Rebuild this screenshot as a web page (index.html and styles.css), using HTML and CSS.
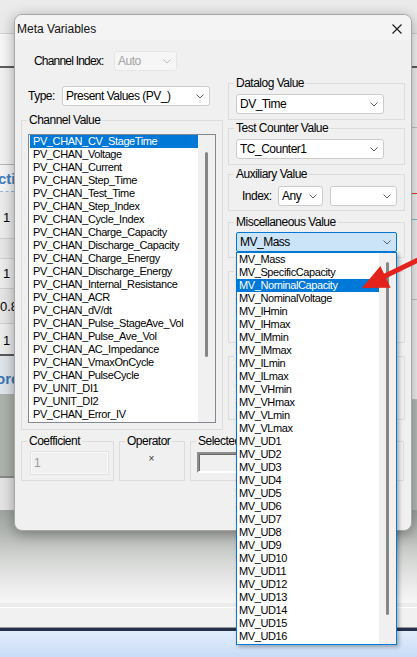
FILE: index.html
```html
<!DOCTYPE html>
<html>
<head>
<meta charset="utf-8">
<title>Meta Variables</title>
<link rel="stylesheet" href="styles.css">
</head>
<body>
<div class="app">
  <div class="app-top"></div>
  <div class="app-mid">
    <div class="pane-left">
      <div class="lp-a"></div>
      <div class="lp-head"><span>cti</span></div>
      <div class="lp-row lp-r1"><span>1</span></div>
      <div class="lp-row lp-r2"></div>
      <div class="lp-row lp-r3"><span>1</span></div>
      <div class="lp-row lp-r4"><span>0.8</span></div>
      <div class="lp-row lp-r5"><span>1</span></div>
      <div class="lp-head2"><span>ore</span></div>
      <div class="lp-grey"></div>
      <div class="lp-light"></div>
    </div>
    <div class="pane-center"></div>
    <div class="pane-right">
      <div class="rp rp1"></div>
      <div class="rp rp2"></div>
      <div class="rp rp3"></div>
      <div class="rp rp4"></div>
      <div class="rp rp5"></div>
      <div class="rp rp6"></div>
    </div>
  </div>
  <div class="app-fade"></div>
  <div class="app-status"></div>
  <div class="app-navline"></div>
  <div class="app-task"></div>
</div>

<div class="dialog">
  <div class="titlebar">
    <span class="title">Meta Variables</span>
    <svg class="close" viewBox="0 0 10 10"><path d="M0.5 0.5 L9.5 9.5 M9.5 0.5 L0.5 9.5"/></svg>
  </div>
  <div class="dbody">
    <div class="row-index">
      <span class="lbl lbl-ci">Channel Index:</span>
      <div class="combo disabled w-auto"><span>Auto</span><svg class="chev" viewBox="0 0 8 5"><path d="M0.5 0.5 L4 4 L7.5 0.5"/></svg></div>
    </div>
    <div class="cols">
      <div class="col-left">
        <div class="row-type">
          <span class="lbl lbl-type">Type:</span>
          <div class="combo w-type"><span>Present Values (PV_)</span><svg class="chev" viewBox="0 0 8 5"><path d="M0.5 0.5 L4 4 L7.5 0.5"/></svg></div>
        </div>
        <fieldset class="grp grp-channel">
          <legend>Channel Value</legend>
          <div class="listbox">
            <ul class="items">
              <li class="sel">PV_CHAN_CV_StageTime</li>
              <li>PV_CHAN_Voltage</li>
              <li>PV_CHAN_Current</li>
              <li>PV_CHAN_Step_Time</li>
              <li>PV_CHAN_Test_Time</li>
              <li>PV_CHAN_Step_Index</li>
              <li>PV_CHAN_Cycle_Index</li>
              <li>PV_CHAN_Charge_Capacity</li>
              <li>PV_CHAN_Discharge_Capacity</li>
              <li>PV_CHAN_Charge_Energy</li>
              <li>PV_CHAN_Discharge_Energy</li>
              <li>PV_CHAN_Internal_Resistance</li>
              <li>PV_CHAN_ACR</li>
              <li>PV_CHAN_dV/dt</li>
              <li>PV_CHAN_Pulse_StageAve_Vol</li>
              <li>PV_CHAN_Pulse_Ave_Vol</li>
              <li>PV_CHAN_AC_Impedance</li>
              <li>PV_CHAN_VmaxOnCycle</li>
              <li>PV_CHAN_PulseCycle</li>
              <li>PV_UNIT_DI1</li>
              <li>PV_UNIT_DI2</li>
              <li>PV_CHAN_Error_IV</li>
            </ul>
            <div class="vscroll vs-channel"><div class="thumb"></div></div>
          </div>
        </fieldset>
      </div>
      <div class="col-right">
        <fieldset class="grp grp-r grp-datalog">
          <legend>Datalog Value</legend>
          <div class="combo w-wide"><span>DV_Time</span><svg class="chev" viewBox="0 0 8 5"><path d="M0.5 0.5 L4 4 L7.5 0.5"/></svg></div>
        </fieldset>
        <fieldset class="grp grp-r grp-tc">
          <legend>Test Counter Value</legend>
          <div class="combo w-wide"><span>TC_Counter1</span><svg class="chev" viewBox="0 0 8 5"><path d="M0.5 0.5 L4 4 L7.5 0.5"/></svg></div>
        </fieldset>
        <fieldset class="grp grp-r grp-aux">
          <legend>Auxiliary Value</legend>
          <div class="aux-row">
            <span class="lbl lbl-idx">Index:</span>
            <div class="combo w-any"><span>Any</span><svg class="chev" viewBox="0 0 8 5"><path d="M0.5 0.5 L4 4 L7.5 0.5"/></svg></div>
            <div class="combo w-blank"><span></span><svg class="chev" viewBox="0 0 8 5"><path d="M0.5 0.5 L4 4 L7.5 0.5"/></svg></div>
          </div>
        </fieldset>
        <fieldset class="grp grp-r grp-misc">
          <legend>Miscellaneous Value</legend>
          <div class="combo open w-misc"><span>MV_Mass</span><svg class="chev" viewBox="0 0 8 5"><path d="M0.5 0.5 L4 4 L7.5 0.5"/></svg>
            <div class="dropdown">
              <ul class="items">
                <li>MV_Mass</li>
                <li>MV_SpecificCapacity</li>
                <li class="sel">MV_NominalCapacity</li>
                <li>MV_NominalVoltage</li>
                <li>MV_IHmin</li>
                <li>MV_IHmax</li>
                <li>MV_IMmin</li>
                <li>MV_IMmax</li>
                <li>MV_ILmin</li>
                <li>MV_ILmax</li>
                <li>MV_VHmin</li>
                <li>MV_VHmax</li>
                <li>MV_VLmin</li>
                <li>MV_VLmax</li>
                <li>MV_UD1</li>
                <li>MV_UD2</li>
                <li>MV_UD3</li>
                <li>MV_UD4</li>
                <li>MV_UD5</li>
                <li>MV_UD6</li>
                <li>MV_UD7</li>
                <li>MV_UD8</li>
                <li>MV_UD9</li>
                <li>MV_UD10</li>
                <li>MV_UD11</li>
                <li>MV_UD12</li>
                <li>MV_UD13</li>
                <li>MV_UD14</li>
                <li>MV_UD15</li>
                <li>MV_UD16</li>
              </ul>
              <div class="vscroll vs-drop"><div class="thumb"></div></div>
            </div>
          </div>
        </fieldset>
        <fieldset class="grp grp-r grp-hidden1"><legend>&nbsp;</legend></fieldset>
        <fieldset class="grp grp-r grp-hidden2"><legend>&nbsp;</legend></fieldset>
      </div>
    </div>
    <div class="row-bottom">
      <fieldset class="grp grp-coef">
        <legend>Coefficient</legend>
        <div class="edit disabled-edit">1</div>
      </fieldset>
      <fieldset class="grp grp-op">
        <legend>Operator</legend>
        <div class="op-sign">×</div>
      </fieldset>
      <fieldset class="grp grp-selected">
        <legend>Selected</legend>
        <div class="edit sunken"></div>
      </fieldset>
    </div>
  </div>
</div>

<svg class="arrow" viewBox="0 0 57 42">
  <path class="arrow-shaft" d="M58 10 L24 26.5"/>
  <polygon class="arrow-head" points="2,38 20.4,16.1 30.6,37.7"/>
</svg>
</body>
</html>
```

FILE: styles.css
```css
* { box-sizing: border-box; margin: 0; padding: 0; }
html, body { width: 417px; height: 657px; overflow: hidden; }
body {
  position: relative;
  font-family: "Liberation Sans", Arial, sans-serif;
  background: #f0f0f0;
  color: #000;
}

/* ---------- background application ---------- */
.app { display: flex; flex-direction: column; height: 657px; }
.app-top {
  height: 68px;
  background: linear-gradient(#ebebeb 0, #ebebeb 33px, #d2d2d2 33px, #d2d2d2 34px, #f6f6f6 34px);
  border-bottom: 2px solid #5d5d5d;
}
.app-mid { display: flex; height: 442px; }
.pane-left { width: 14px; display: flex; flex-direction: column; overflow: hidden; }
.pane-center { flex: 1; background: #f0f0f0; }
.pane-right { width: 5px; display: flex; flex-direction: column; background: #f2f2f2; }

.lp-a { height: 97px; background: #f1f1f1; border-bottom: 1px solid #b5b5b5; }
.lp-head {
  height: 27px; background: #f4f4f4;
  border-bottom: 1px dashed #8fb8df;
  font: bold 15px/28px "Liberation Sans", Arial, sans-serif;
  color: #3f7fc0; white-space: nowrap;
}
.lp-head span { margin-left: -2px; }
.lp-row {
  border-bottom: 1px solid #cfcfcf; background: #ececec;
  font: 13px "Liberation Sans", Arial, sans-serif; white-space: nowrap;
  display: flex; align-items: center; padding-left: 3px;
}
.lp-r1 { height: 47px; padding-top: 4px; }
.lp-r2 { height: 20px; background: #e6e6e6; }
.lp-r3 { height: 30px; }
.lp-r4 { height: 35px; padding-left: 0; background: #e6e6e6; }
.lp-r5 { height: 32px; border-bottom: 2px solid #5a5a5a; padding-top: 2px; }
.lp-head2 {
  height: 38px; background: #dfe5ea;
  font: bold 15px/46px "Liberation Sans", Arial, sans-serif;
  color: #3b76b3; white-space: nowrap;
}
.lp-head2 span { margin-left: -4px; }
.lp-grey { height: 84px; background: #acb2ac; border-bottom: 2px solid #8a8a8a; }
.lp-light { flex: 1; background: #e4e4e4; }

.rp { border-bottom: 1px solid #c4c4c4; }
.rp1 { height: 60px; }
.rp2 { height: 66px; border-bottom: 1px solid #e03a2e; }
.rp3 { height: 26px; border-bottom: 1px solid #7fb6c8; }
.rp4 { height: 80px; }
.rp5 { height: 100px; }
.rp6 { flex: 1; border-bottom: 0; background: #b8bcb8; }

.app-fade {
  height: 93px;
  background: linear-gradient(#9fa49f 0%, #b4b8b4 25%, #d6d8d6 55%, #eeeeee 85%, #f6f6f6 100%);
}
.app-status {
  height: 25px; background: #f1f1f1;
  border-top: 4px solid #ececec;
  box-shadow: inset 0 1px 0 #ffffff;
  border-bottom: 1px solid #9a9a9a;
}
.app-navline { height: 3px; background: #25304a; }
.app-task { flex: 1; background: linear-gradient(#e2edfb, #c9ddf7); }

/* ---------- dialog ---------- */
.dialog {
  position: absolute; left: 14px; top: 14px;
  width: 398px; height: 517px;
  background: #f0f0f0;
  border: 1px solid #a7a7a7;
  border-radius: 8px;
  box-shadow: 0 3px 14px rgba(0, 0, 0, 0.35);
}
.titlebar {
  height: 25px; display: flex; align-items: center; justify-content: space-between;
  padding: 0 9px 0 2px;
  background: #f4f4f4;
  border-radius: 7px 7px 0 0;
}
.title { font: 12px/1 "Liberation Sans", Arial, sans-serif; color: #111; padding-top: 2px; }
.close { width: 10px; height: 10px; fill: none; stroke: #1a1a1a; stroke-width: 1.1; margin-top: 2px; }

.dbody { padding: 11px 6px 0 6px; }

.lbl { font: 12px/1 "Liberation Sans", Arial, sans-serif; letter-spacing: -0.5px; white-space: nowrap; }
.row-index { display: flex; align-items: center; height: 20px; padding-left: 13px; }
.lbl-ci { width: 80px; letter-spacing: -0.8px; }

.combo {
  position: relative;
  display: flex; align-items: center; justify-content: space-between;
  height: 20px;
  background: #fff;
  border: 1px solid #cbcbcb;
  border-radius: 3px;
  padding: 0 5px 0 3px;
  font: 12px/1 "Liberation Sans", Arial, sans-serif;
  letter-spacing: -0.5px;
  white-space: nowrap;
}
.chev { width: 8px; height: 5px; flex: none; fill: none; stroke: #5c5c5c; stroke-width: 1; }
.combo.disabled { background: #f6f6f6; border-color: #e6e6e6; color: #a3a3a3; }
.combo.disabled .chev { stroke: #bdbdbd; }
.w-auto { width: 63px; }
.w-type { width: 148px; }
.w-wide { width: 148px; }
.w-any { width: 45px; }
.w-blank { width: 67px; }
.w-misc { width: 161px; }
.combo.open { background: #cce4f7; border-color: #0078d7; border-radius: 2px; }

.cols { display: grid; grid-template-columns: 202px 177px; column-gap: 5px; align-items: start; }
.col-left { margin-top: 15px; }
.col-right { margin-top: 4px; display: flex; flex-direction: column; }

.row-type { display: flex; align-items: center; height: 20px; padding-left: 7px; }
.lbl-type { width: 34px; }

/* group boxes */
.grp { border: 1px solid #dcdcdc; margin: 0; padding: 0; min-width: 0; }
.grp > legend {
  margin-left: 5px; padding: 0 2px;
  font: 12px/16px "Liberation Sans", Arial, sans-serif;
  letter-spacing: -0.5px;
  white-space: nowrap;
}

.grp-channel { margin-top: 6px; padding: 6px 0 6px 0; }
.listbox {
  display: flex; height: 289px; width: 188px; margin-left: 6px;
  background: #fff; border: 1px solid #828790;
}
.items { list-style: none; flex: 1; padding-left: 1px; }
.items li {
  height: 13px;
  font: 11px/13px "Liberation Sans", Arial, sans-serif;
  letter-spacing: -0.4px;
  padding-left: 3px;
  white-space: nowrap;
}
.items li.sel { background: #0078d7; color: #fff; }
.vscroll { width: 17px; flex: none; background: #f0f0f0; position: relative; }
.thumb { position: absolute; left: 7px; width: 3px; border-radius: 2px; background: #868686; }
.vs-channel .thumb { top: 17px; height: 205px; }

.grp-r { padding: 3px 0 5px 0; }
.grp-r .combo { margin-left: 7px; }
.grp-aux { margin-top: 1px; padding: 4px 0 4px 0; }
.aux-row { display: flex; align-items: center; margin-left: 13px; }
.grp-aux .aux-row .combo { margin-left: 0; }
.lbl-idx { width: 36px; }
.grp-aux .aux-row .w-blank { margin-left: 7px; }
.grp-misc { margin-top: 3px; padding: 2px 0 5px 0; }
.grp-hidden1 { margin-top: 5px; height: 80px; }
.grp-hidden2 { margin-top: 5px; height: 72px; }

.dropdown {
  position: absolute; left: -1px; top: 19px;
  width: 161px; height: 393px;
  display: flex;
  background: #fff;
  border: 1px solid #0078d7;
  box-shadow: 2px 2px 4px rgba(0, 0, 0, 0.3);
  z-index: 5;
  color: #000;
  letter-spacing: 0;
}
.dropdown .items { padding-left: 0; }
.dropdown .items li { padding-left: 2px; }
.vs-drop .thumb { top: 9px; height: 353px; }

/* bottom row */
.row-bottom { display: flex; gap: 5px; margin-top: 3px; }
.grp-coef { width: 93px; padding: 2px 0 4px 0; }
.grp-op { width: 66px; padding: 2px 0 4px 0; }
.grp-selected { width: 214px; padding: 3px 0 7px 0; }
.edit { height: 24px; font: 12px/22px "Liberation Sans", Arial, sans-serif; padding-left: 3px; }
.disabled-edit { width: 79px; margin-left: 8px; background: #f0f0f0; border: 1px solid #e2e2e2; box-shadow: inset 0 0 0 1px #fafafa; color: #9a9a9a; }
.sunken { width: 60px; height: 21px; margin-left: 6px; border: 2px solid; border-color: #8e8e8e #ffffff #ffffff #8e8e8e; box-shadow: inset 1px 1px 0 #6a6a6a; background: #f0f0f0; }
.op-sign { text-align: center; font: 10px/16px "Liberation Sans", Arial, sans-serif; color: #333; padding-right: 1px; }

/* annotation arrow */
.arrow {
  position: absolute; left: 360px; top: 250px;
  width: 57px; height: 42px; overflow: visible;
  z-index: 10;
}
.arrow-shaft { stroke: #e3231b; stroke-width: 5; stroke-linecap: butt; fill: none; }
.arrow-head { fill: #e3231b; }
```
